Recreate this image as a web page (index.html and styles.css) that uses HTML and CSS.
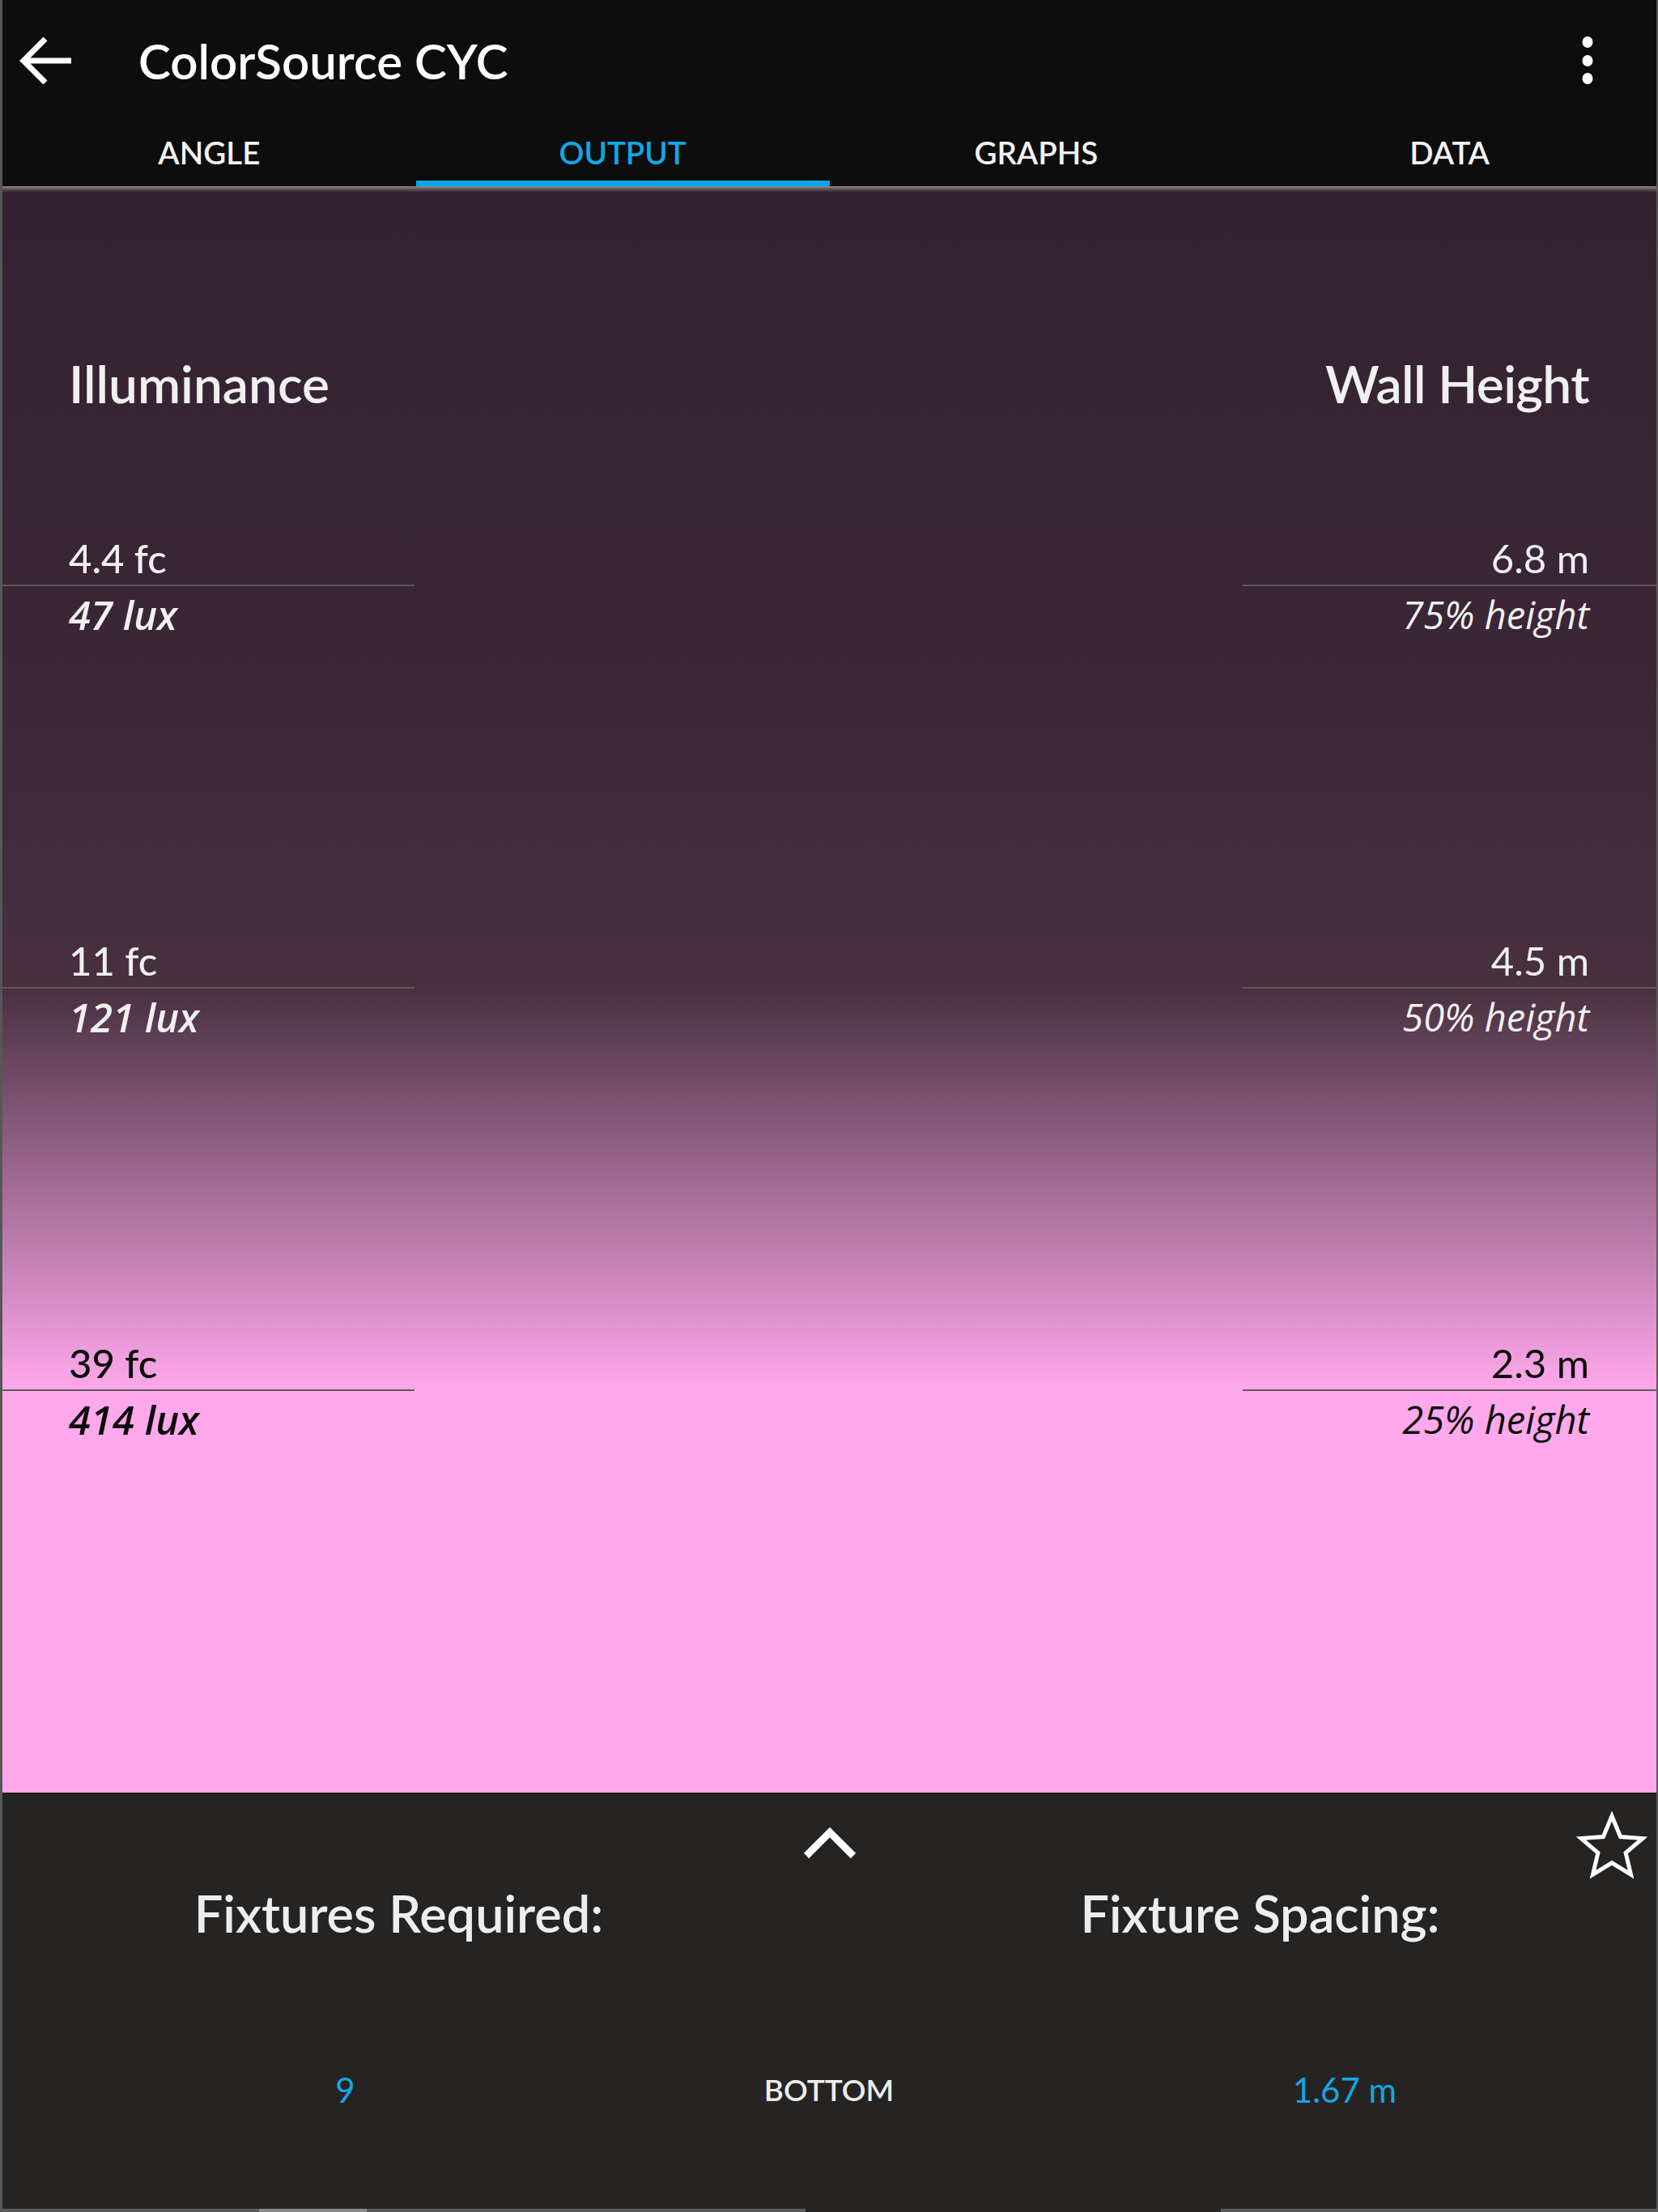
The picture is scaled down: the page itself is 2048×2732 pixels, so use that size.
FILE: index.html
```html
<!DOCTYPE html>
<html lang="en">
<head>
<meta charset="utf-8">
<title>ColorSource CYC</title>
<link rel="stylesheet" href="styles.css">
</head>
<body>
<div class="app">
  <header class="appbar">
    <div class="toolbar">
      <svg class="back" width="66" height="58" viewBox="0 0 66 58" aria-label="Back">
        <path d="M5 29 H64 M32 2 L5 29 L32 56" fill="none" stroke="#fff" stroke-width="7"/>
      </svg>
      <h1 class="title">ColorSource CYC</h1>
      <svg class="more" width="14" height="60" viewBox="0 0 14 60" aria-label="More">
        <ellipse cx="7" cy="7" rx="6.5" ry="7" fill="#fff"/>
        <ellipse cx="7" cy="30" rx="6.5" ry="7" fill="#fff"/>
        <ellipse cx="7" cy="52" rx="6.5" ry="7" fill="#fff"/>
      </svg>
    </div>
    <nav class="tabs">
      <div class="tab">ANGLE</div>
      <div class="tab active">OUTPUT</div>
      <div class="tab">GRAPHS</div>
      <div class="tab">DATA</div>
    </nav>
  </header>
  <div class="shadow"></div>

  <main class="wall">
    <div class="headings">
      <span>Illuminance</span>
      <span>Wall Height</span>
    </div>

    <div class="marker m1">
      <div class="side left">
        <div class="val">4.4 fc</div>
        <div class="rule"></div>
        <div class="sub">47 lux</div>
      </div>
      <div class="side right">
        <div class="val">6.8 m</div>
        <div class="rule"></div>
        <div class="sub">75% height</div>
      </div>
    </div>

    <div class="marker m2">
      <div class="side left">
        <div class="val">11 fc</div>
        <div class="rule"></div>
        <div class="sub">121 lux</div>
      </div>
      <div class="side right">
        <div class="val">4.5 m</div>
        <div class="rule"></div>
        <div class="sub">50% height</div>
      </div>
    </div>

    <div class="marker m3 dark">
      <div class="side left">
        <div class="val">39 fc</div>
        <div class="rule"></div>
        <div class="sub">414 lux</div>
      </div>
      <div class="side right">
        <div class="val">2.3 m</div>
        <div class="rule"></div>
        <div class="sub">25% height</div>
      </div>
    </div>
  </main>

  <section class="panel">
    <div class="panel-top">
      <div></div>
      <svg class="chevron" width="72" height="46" viewBox="0 0 72 46" aria-label="Expand">
        <polyline points="7,38 36,9 65,38" fill="none" stroke="#fff" stroke-width="9"/>
      </svg>
      <svg class="star" width="94" height="90" viewBox="0 0 94 90" aria-label="Favorite">
        <polygon points="47,9 57.6,34.5 85,36.6 64.1,54.4 70.5,81.2 47,66.8 23.5,81.2 29.9,54.4 9,36.6 36.4,34.5" fill="none" stroke="#fff" stroke-width="5"/>
      </svg>
    </div>
    <div class="labels">
      <div class="label">Fixtures Required:</div>
      <div></div>
      <div class="label">Fixture Spacing:</div>
    </div>
    <div class="values">
      <div class="num">9</div>
      <div class="mode">BOTTOM</div>
      <div class="num spacing">1.67 m</div>
    </div>
  </section>
  <div class="navstrip">
    <span class="seg a"></span><span class="seg b"></span><span class="seg c"></span><span class="seg d"></span><span class="seg e"></span>
  </div>
</div>
</body>
</html>
```

FILE: styles.css
```css
* { box-sizing: border-box; margin: 0; padding: 0; }

html, body {
  width: 2048px;
  height: 2732px;
  background: #0d0d0d;
  overflow: hidden;
}

body {
  font-family: Lato, "Open Sans", sans-serif;
  color: #f0f0f0;
}

.app {
  width: 2048px;
  height: 2732px;
  display: flex;
  flex-direction: column;
  border-left: 3px solid #575757;
  border-right: 2px solid #5a5a5a;
}

/* ---------- App bar ---------- */
.appbar {
  background: #0d0d0d;
  height: 230px;
  display: flex;
  flex-direction: column;
}

.toolbar {
  height: 150px;
  display: flex;
  align-items: center;
  padding-left: 21px;
  padding-right: 78px;
}

.back { flex: none; display: block; }

.title {
  margin-left: 81px;
  font-size: 60px;
  line-height: 80px;
  font-weight: 600;
  color: #ffffff;
  flex: 1;
}

.more { flex: none; display: block; }

.tabs {
  height: 80px;
  display: flex;
}

.tab {
  flex: 1;
  height: 80px;
  padding-top: 12px;
  text-align: center;
  font-size: 38.5px;
  line-height: 52px;
  font-weight: 600;
  color: #f2f2f2;
  border-bottom: 7px solid transparent;
}

.tab.active {
  color: #0fa8e9;
  border-bottom-color: #09a6e6;
}

.shadow {
  height: 7px;
  background: linear-gradient(#928d88, #5d5459 50%, #3a2836);
}

/* ---------- Wall ---------- */
.wall {
  height: 1977px;
  padding-top: 197px;
  background: linear-gradient(to bottom,
    #342230 0px,
    #3b2736 600px,
    #48303f 983px,
    #ffa8ec 1480px,
    #ffa8ec 100%);
  display: flex;
  flex-direction: column;
}

.headings {
  display: flex;
  justify-content: space-between;
  padding: 0 83px 0 82px;
  font-size: 64px;
  line-height: 80px;
  font-weight: 600;
  color: #f0f0f0;
}

.headings span:last-child { letter-spacing: -0.6px; }

.marker {
  display: flex;
  justify-content: space-between;
  color: #f0f0f0;
}

.m1 { margin-top: 145px; }
.m2, .m3 { margin-top: 365px; }

.marker.dark { color: #0c0c0c; }

.side { width: 511px; }
.side.left { width: 509px; }

.val {
  font-size: 49px;
  line-height: 60px;
  margin-bottom: 3px;
}

.left .val { font-weight: 500; }

.rule {
  height: 2px;
  background: #5f5a5b;
}

.sub {
  margin-top: 3px;
  font-family: "Open Sans", sans-serif;
  font-style: italic;
  font-size: 47px;
  line-height: 64px;
}

.left .sub {
  font-weight: 600;
  font-size: 49px;
}

.left .val, .left .sub { padding-left: 82px; }
.right { text-align: right; }
.right .val, .right .sub { padding-right: 83px; }

/* ---------- Bottom panel ---------- */
.panel {
  height: 514px;
  background: #252423;
  border-top: 2px solid #1c1b1a;
  display: flex;
  flex-direction: column;
}

.panel-top {
  height: 107px;
  display: grid;
  grid-template-columns: 1fr auto 1fr;
  align-items: start;
}

.chevron { margin-top: 38px; display: block; }
.star { margin-top: 18px; justify-self: end; margin-right: 8px; display: block; }

.labels {
  display: grid;
  grid-template-columns: 979px 1fr 979px;
  font-size: 63px;
  line-height: 80px;
  font-weight: 600;
  color: #eeeeee;
}

.label { text-align: center; }

.values {
  margin-top: 152px;
  display: grid;
  grid-template-columns: 847px 1fr 848px;
  line-height: 52px;
  align-items: center;
}

.num {
  text-align: center;
  font-size: 42px;
  color: #18a5e3;
}

.num.spacing { padding-left: 78px; }

.mode {
  text-align: center;
  font-size: 37px;
  font-weight: 600;
  color: #ececec;
}

/* ---------- Bottom strip ---------- */
.navstrip {
  height: 4px;
  display: flex;
  background: #252423;
}

.seg { display: block; height: 4px; }
.seg.a { width: 317px; background: #5c5c5c; }
.seg.b { width: 133px; background: #8a8a8a; }
.seg.c { width: 542px; background: #5c5c5c; }
.seg.d { width: 513px; background: #252423; }
.seg.e { flex: 1; background: #5c5c5c; }
```
